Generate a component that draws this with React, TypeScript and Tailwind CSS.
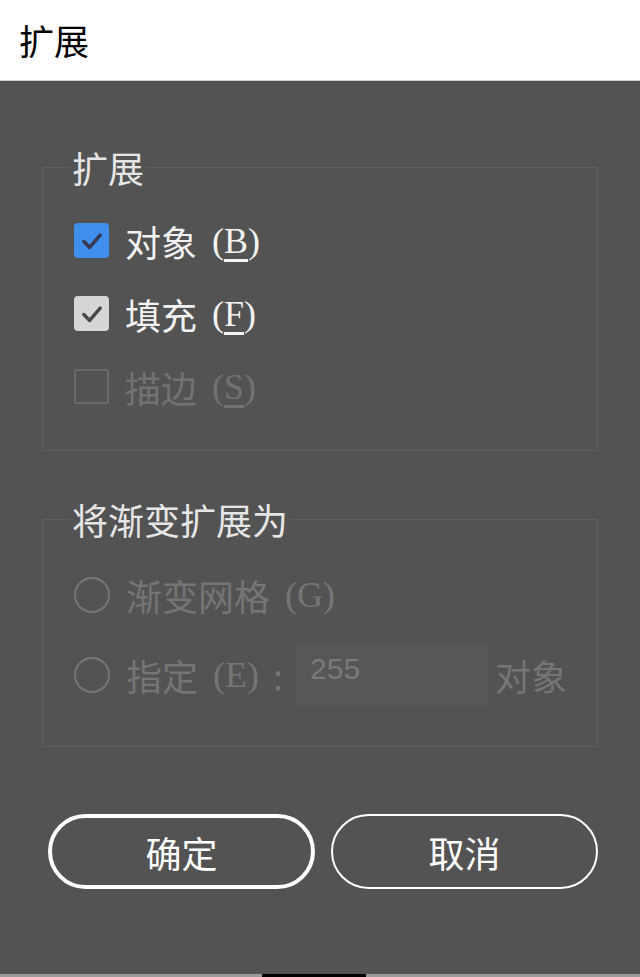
import type { ReactNode } from "react"

const serif = "font-['Liberation_Serif','Noto_Sans_CJK_SC',serif]"

function Check({ color }: { color: string }) {
  return (
    <svg viewBox="0 0 24 24" className="h-[28px] w-[28px]" fill="none">
      <polyline points="5,12.5 10,17.5 19,7" stroke={color} strokeWidth="3" strokeLinecap="round" strokeLinejoin="round" />
    </svg>
  )
}

function Key({ k, line = true }: { k: string; line?: boolean }) {
  return (
    <span className={`ml-[15px] ${serif} text-[36px]`}>
      (<span className={line ? "underline decoration-[3px] underline-offset-[6px]" : ""}>{k}</span>)
    </span>
  )
}

function Row({ box, children, dim }: { box: ReactNode; children: ReactNode; dim?: boolean }) {
  return (
    <div className={`flex h-[73px] items-center gap-[16px] ${dim ? "text-[#727272]" : "text-[#f2f2f2]"}`}>
      {box}
      <div className="flex items-center text-[36px] leading-none">{children}</div>
    </div>
  )
}

function Radio() {
  return <div className="h-[36px] w-[36px] shrink-0 rounded-full border-2 border-[#757575]" />
}

export default function App() {
  return (
    <div className="flex h-[977px] w-[640px] flex-col bg-[#535353] font-['Noto_Sans_CJK_SC',sans-serif]">
      <div className="flex h-[81px] shrink-0 items-center border-b border-[#d0d0d0] bg-white pl-[19px] text-[35px] text-black">
        扩展
      </div>

      <div className="flex flex-col px-[42px]">
        <fieldset className="mt-[69px] rounded-[3px] border border-[#626262] pb-[27px]">
          <legend className="ml-[27px] px-[2px] text-[36px] leading-[34px] text-[#e6e6e6]">扩展</legend>
          <div className="pl-[31px] pt-[20px]">
            <Row
              box={
                <div className="flex h-[35px] w-[35px] shrink-0 items-center justify-center rounded-[4px] bg-[#3f8fec]">
                  <Check color="#3b3852" />
                </div>
              }
            >
              对象<Key k="B" />
            </Row>
            <Row
              box={
                <div className="flex h-[35px] w-[35px] shrink-0 items-center justify-center rounded-[4px] bg-[#d6d6d6]">
                  <Check color="#4a4a4a" />
                </div>
              }
            >
              填充<Key k="F" />
            </Row>
            <Row dim box={<div className="h-[35px] w-[35px] shrink-0 rounded-[2px] border-2 border-[#6a6a6a]" />}>
              描边<Key k="S" />
            </Row>
          </div>
        </fieldset>

        <fieldset className="mt-[51px] rounded-[3px] border border-[#626262] pb-[31px]">
          <legend className="ml-[27px] px-[2px] text-[36px] leading-[34px] text-[#e6e6e6]">将渐变扩展为</legend>
          <div className="pl-[31px] pt-[19px] text-[#757575]">
            <div className="flex h-[80px] items-center gap-[16px]">
              <Radio />
              <div className="flex items-center text-[36px] leading-none">
                渐变网格<Key k="G" line={false} />
              </div>
            </div>
            <div className="flex h-[80px] items-center gap-[16px]">
              <Radio />
              <div className="flex items-center text-[36px] leading-none">
                指定<Key k="E" line={false} />
                <span className="ml-[14px]">:</span>
              </div>
              <div className="ml-[-3px] flex h-[62px] w-[191px] items-start bg-[#575757] pl-[14px] pt-[10px] font-['Liberation_Sans',sans-serif] text-[30px] leading-none text-[#7a7a7a]">
                255
              </div>
              <div className="ml-[-8px] text-[36px] leading-none">对象</div>
            </div>
          </div>
        </fieldset>
      </div>

      <div className="mt-[67px] flex gap-[16px] px-[48px] pr-[42px]">
        <button className="flex h-[75px] w-[267px] items-center justify-center rounded-full border-4 border-white text-[36px] text-white">
          确定
        </button>
        <button className="flex h-[75px] w-[267px] items-center justify-center rounded-full border-2 border-white text-[36px] text-white">
          取消
        </button>
      </div>

      <div className="mt-auto flex h-[3px] w-full bg-[#9a9a9a]">
        <div className="ml-[262px] h-full w-[104px] bg-black" />
      </div>
    </div>
  )
}
